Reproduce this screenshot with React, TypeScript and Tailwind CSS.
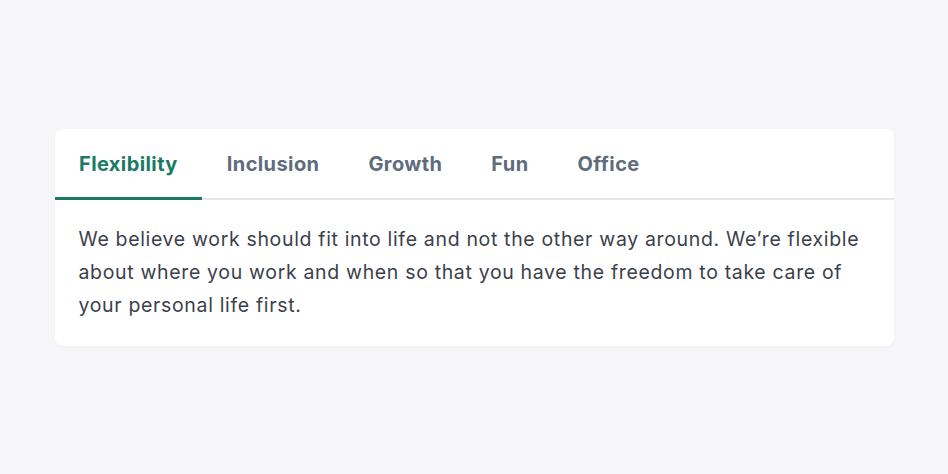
import { useState } from 'react'

const tabs = [
	{
		id: 'flexibility',
		label: 'Flexibility',
		body: 'We believe work should fit into life and not the other way around. We’re flexible about where you work and when so that you have the freedom to take care of your personal life first.',
	},
	{ id: 'inclusion', label: 'Inclusion', body: '' },
	{ id: 'growth', label: 'Growth', body: '' },
	{ id: 'fun', label: 'Fun', body: '' },
	{ id: 'office', label: 'Office', body: '' },
]

export default function App() {
	const [active, setActive] = useState('flexibility')
	const current = tabs.find((t) => t.id === active) ?? tabs[0]

	return (
		<div className="flex h-[474px] w-full items-center justify-center bg-[#f6f5f8] font-['Inter',sans-serif]">
			<div className="w-[839px] rounded-lg bg-white shadow-[0_1px_3px_rgba(0,0,0,0.03)]">
				<div className="flex border-b-2 border-[#e6e6e9]">
					{tabs.map((tab) => {
						const isActive = tab.id === active
						return (
							<button
								key={tab.id}
								onClick={() => setActive(tab.id)}
								className={
									isActive
										? '-mb-[2px] border-b-[3px] border-[#1b7a65] px-[24.5px] pt-[22px] pb-[20px] text-[20px] leading-[26px] font-bold tracking-[0.4px] text-[#1b7a65]'
										: '-mb-[2px] border-b-[3px] border-transparent px-[24.5px] pt-[22px] pb-[20px] text-[20px] leading-[26px] font-bold tracking-[0.4px] text-[#606b7e]'
								}
							>
								{tab.label}
							</button>
						)
					})}
				</div>
				<p className="px-6 pt-[23px] pb-[24px] text-[19.5px] leading-[33px] tracking-[0.66px] text-[#3b3f4b]">
					{current.body}
				</p>
			</div>
		</div>
	)
}
